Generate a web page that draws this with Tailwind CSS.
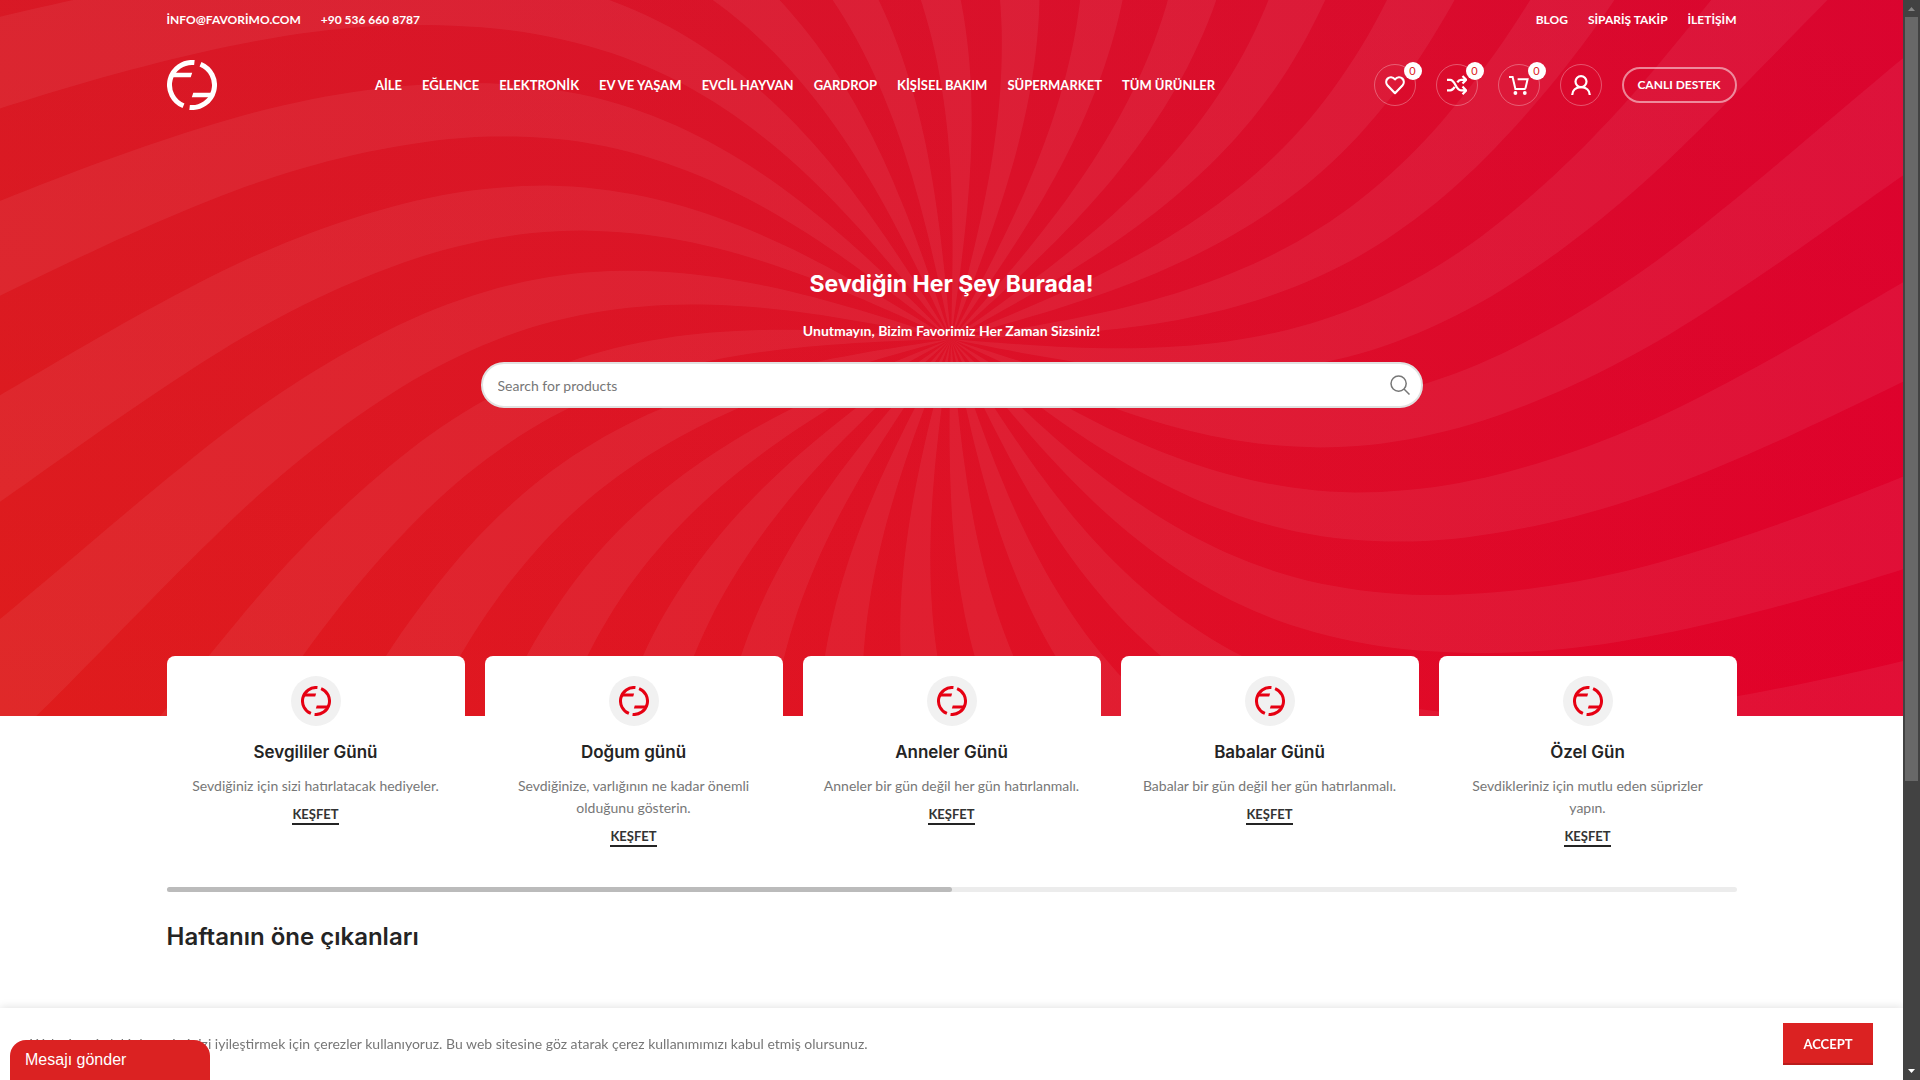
<!DOCTYPE html>
<html lang="tr">
<head>
    <meta charset="UTF-8">
    <meta name="viewport" content="width=device-width, initial-scale=1.0">
    <title>Favorimo</title>
    <script src="https://cdn.jsdelivr.net/npm/@tailwindcss/browser@4"></script>
</head>
<body class="bg-white font-[Lato,sans-serif] text-sm text-[#777]">
    <!-- Shared symbols -->
    <svg class="hidden">
        <symbol id="logo" viewBox="0 0 50 50">
            <g id="logoHalf">
                <path d="M27.4 2.6A22.5 22.5 0 0 0 16.5 45.8" fill="none" stroke="currentColor" stroke-width="5"/>
                <path d="M7 12.7H25.2L23.7 17.3H5Z" fill="currentColor"/>
            </g>
            <use href="#logoHalf" transform="rotate(180 25 25)"/>
        </symbol>
    </svg>

    <div class="min-h-screen pr-[17px]">
        <!-- Hero -->
        <div class="relative h-[716px] overflow-hidden bg-linear-to-r from-[#df1c1c] to-[#e1002a] text-white">
            <svg class="absolute inset-0 h-full w-full" viewBox="0 0 1903 716" preserveAspectRatio="xMidYMid slice" aria-hidden="true">
                <defs>
                    <linearGradient id="shade" x1="0" y1="0" x2="0" y2="1">
                        <stop offset="0" stop-color="#c8103c" stop-opacity=".28"/>
                        <stop offset="1" stop-color="#c8103c" stop-opacity="0"/>
                    </linearGradient>
                </defs>
                <rect width="1903" height="716" fill="url(#shade)"/>
                <path id="rays" fill="#fff" fill-opacity=".06"/>
            </svg>

            <header class="relative mx-auto max-w-[1570px]">
                <div class="flex h-10 items-center justify-between text-xs font-bold">
                    <div class="flex gap-5">
                        <a href="#">İNFO@FAVORİMO.COM</a>
                        <a href="#">+90 536 660 8787</a>
                    </div>
                    <nav class="flex gap-5">
                        <a href="#">BLOG</a>
                        <a href="#">SİPARİŞ TAKİP</a>
                        <a href="#">İLETİŞİM</a>
                    </nav>
                </div>
                <div class="flex h-[90px] items-center justify-between">
                    <a href="#" aria-label="Favorimo"><svg class="size-[50px]"><use href="#logo"/></svg></a>
                    <nav class="flex gap-5 text-[13px] font-bold">
                        <a href="#">AİLE</a>
                        <a href="#">EĞLENCE</a>
                        <a href="#">ELEKTRONİK</a>
                        <a href="#">EV VE YAŞAM</a>
                        <a href="#">EVCİL HAYVAN</a>
                        <a href="#">GARDROP</a>
                        <a href="#">KİŞİSEL BAKIM</a>
                        <a href="#">SÜPERMARKET</a>
                        <a href="#">TÜM ÜRÜNLER</a>
                    </nav>
                    <div class="flex items-center gap-5">
                        <a href="#" aria-label="Favoriler" class="relative flex size-[42px] items-center justify-center rounded-full border border-white/30">
                            <svg class="size-5" viewBox="0 0 20 20" fill="none" stroke="currentColor" stroke-width="2.2" stroke-linejoin="round"><path d="M10 18.2 2.6 10.4C.8 8.4.8 5.4 2.6 3.6 4.5 1.7 7.7 1.7 10 4.4 12.3 1.7 15.5 1.7 17.4 3.6 19.2 5.4 19.2 8.4 17.4 10.4Z"/></svg>
                            <span class="absolute -top-[3px] -right-[7px] flex size-[18px] items-center justify-center rounded-full bg-white text-[11px] text-[#db2222]">0</span>
                        </a>
                        <a href="#" aria-label="Karşılaştır" class="relative flex size-[42px] items-center justify-center rounded-full border border-white/30">
                            <svg class="size-5" viewBox="0 0 20 20" fill="none" stroke="currentColor" stroke-width="2.2"><path d="M0 4.8H3.2C8.5 4.8 8.5 15.4 14 15.4H19M0 15.4H3.2C5.4 15.4 6.6 13.8 7.7 11.9M10.3 7.4C11.3 5.8 12.3 4.8 14 4.8H19M15.5 1 19.2 4.8 15.5 8.6M15.5 11.6 19.2 15.4 15.5 19.2"/></svg>
                            <span class="absolute -top-[3px] -right-[7px] flex size-[18px] items-center justify-center rounded-full bg-white text-[11px] text-[#db2222]">0</span>
                        </a>
                        <a href="#" aria-label="Sepet" class="relative flex size-[42px] items-center justify-center rounded-full border border-white/30">
                            <svg class="size-5" viewBox="0 0 20 20" fill="none" stroke="currentColor" stroke-width="2"><path d="M0 2H3.6L6.4 14H16.6M8.6 4.2H18.6L16.4 13.6"/><circle cx="6.4" cy="18" r="1.9" fill="currentColor" stroke="none"/><circle cx="15.8" cy="18" r="1.9" fill="currentColor" stroke="none"/></svg>
                            <span class="absolute -top-[3px] -right-[7px] flex size-[18px] items-center justify-center rounded-full bg-white text-[11px] text-[#db2222]">0</span>
                        </a>
                        <a href="#" aria-label="Hesabım" class="relative flex size-[42px] items-center justify-center rounded-full border border-white/30">
                            <svg class="size-5" viewBox="0 0 20 20" fill="none" stroke="currentColor" stroke-width="2.2"><circle cx="10" cy="6.6" r="5.5"/><path d="M1.2 20C1.2 15.2 5 12.1 10 12.1S18.8 15.2 18.8 20"/></svg>
                        </a>
                        <a href="#" class="flex h-9 w-[115px] items-center justify-center rounded-full border-2 border-white/50 text-xs font-bold">CANLI DESTEK</a>
                    </div>
                </div>
            </header>

            <div class="relative mx-auto mt-[135px] w-[60%] max-w-[942px] text-center">
                <h1 class="font-[Inter,sans-serif] text-[23px] leading-[38px] font-bold">Sevdiğin Her Şey Burada!</h1>
                <p class="mt-[17px] leading-[22px] font-bold">Unutmayın, Bizim Favorimiz Her Zaman Sizsiniz!</p>
                <form class="relative mt-5">
                    <input type="text" aria-label="Search for products" placeholder="Search for products" class="h-[46px] w-full rounded-full border-2 border-[#e1e1e1] bg-white pr-12 pl-[15px] text-sm text-[#777] placeholder:text-[#777]">
                    <button type="button" aria-label="Search" class="absolute top-0 right-0 flex h-[46px] w-[46px] items-center justify-center text-[#777]">
                        <svg class="size-5" viewBox="0 0 20 20" fill="none" stroke="currentColor" stroke-width="1.5"><circle cx="8.6" cy="8.6" r="7.6"/><path d="M14 14 19.5 19.5"/></svg>
                    </button>
                </form>
            </div>
        </div>

        <main class="relative mx-auto -mt-[60px] max-w-[1570px]">
            <!-- Occasion cards -->
            <div class="grid grid-cols-5 gap-5 text-center leading-[22px]">
                <div class="rounded-t-lg bg-white p-5">
                    <div class="mx-auto flex size-[50px] items-center justify-center rounded-full bg-[#f1f1f1] text-[#e60012]"><svg class="size-[30px]"><use href="#logo"/></svg></div>
                    <h2 class="mt-[15px] mb-3 font-[Inter,sans-serif] text-[17px] leading-[22px] font-semibold text-[#242424]">Sevgililer Günü</h2>
                    <p>Sevdiğiniz için sizi hatırlatacak hediyeler.</p>
                    <a href="#" class="mt-2 inline-block border-b-2 border-[#242424] text-[13px] leading-[18px] font-bold text-[#333]">KEŞFET</a>
                </div>
                <div class="rounded-t-lg bg-white p-5">
                    <div class="mx-auto flex size-[50px] items-center justify-center rounded-full bg-[#f1f1f1] text-[#e60012]"><svg class="size-[30px]"><use href="#logo"/></svg></div>
                    <h2 class="mt-[15px] mb-3 font-[Inter,sans-serif] text-[17px] leading-[22px] font-semibold text-[#242424]">Doğum günü</h2>
                    <p>Sevdiğinize, varlığının ne kadar önemli olduğunu gösterin.</p>
                    <a href="#" class="mt-2 inline-block border-b-2 border-[#242424] text-[13px] leading-[18px] font-bold text-[#333]">KEŞFET</a>
                </div>
                <div class="rounded-t-lg bg-white p-5">
                    <div class="mx-auto flex size-[50px] items-center justify-center rounded-full bg-[#f1f1f1] text-[#e60012]"><svg class="size-[30px]"><use href="#logo"/></svg></div>
                    <h2 class="mt-[15px] mb-3 font-[Inter,sans-serif] text-[17px] leading-[22px] font-semibold text-[#242424]">Anneler Günü</h2>
                    <p>Anneler bir gün değil her gün hatırlanmalı.</p>
                    <a href="#" class="mt-2 inline-block border-b-2 border-[#242424] text-[13px] leading-[18px] font-bold text-[#333]">KEŞFET</a>
                </div>
                <div class="rounded-t-lg bg-white p-5">
                    <div class="mx-auto flex size-[50px] items-center justify-center rounded-full bg-[#f1f1f1] text-[#e60012]"><svg class="size-[30px]"><use href="#logo"/></svg></div>
                    <h2 class="mt-[15px] mb-3 font-[Inter,sans-serif] text-[17px] leading-[22px] font-semibold text-[#242424]">Babalar Günü</h2>
                    <p>Babalar bir gün değil her gün hatırlanmalı.</p>
                    <a href="#" class="mt-2 inline-block border-b-2 border-[#242424] text-[13px] leading-[18px] font-bold text-[#333]">KEŞFET</a>
                </div>
                <div class="rounded-t-lg bg-white p-5">
                    <div class="mx-auto flex size-[50px] items-center justify-center rounded-full bg-[#f1f1f1] text-[#e60012]"><svg class="size-[30px]"><use href="#logo"/></svg></div>
                    <h2 class="mt-[15px] mb-3 font-[Inter,sans-serif] text-[17px] leading-[22px] font-semibold text-[#242424]">Özel Gün</h2>
                    <p>Sevdikleriniz için mutlu eden süprizler yapın.</p>
                    <a href="#" class="mt-2 inline-block border-b-2 border-[#242424] text-[13px] leading-[18px] font-bold text-[#333]">KEŞFET</a>
                </div>
            </div>
            <div class="mt-5 h-[5px] rounded-full bg-[#ececec]">
                <div class="h-full w-1/2 rounded-full bg-[#bbb]"></div>
            </div>
            <h2 class="mt-[29px] font-[Inter,sans-serif] text-2xl leading-8 font-semibold text-[#242424]">Haftanın öne çıkanları</h2>
        </main>
    </div>

    <!-- Cookie notice -->
    <div class="fixed right-[17px] bottom-0 left-0 flex h-[72px] items-center justify-between bg-white px-[30px] shadow-[0_0_9px_rgba(0,0,0,0.14)]">
        <p>Web sitemizdeki deneyiminizi iyileştirmek için çerezler kullanıyoruz. Bu web sitesine göz atarak çerez kullanımımızı kabul etmiş olursunuz.</p>
        <button type="button" class="h-[42px] w-[90px] bg-[#db2222] text-[13px] font-bold text-white shadow-[inset_0_-2px_0_rgba(0,0,0,0.15)]">ACCEPT</button>
    </div>

    <!-- Chat tab -->
    <button type="button" class="fixed bottom-0 left-[10px] h-10 w-[200px] rounded-t-2xl bg-[#db2222] pl-[15px] text-left font-['Liberation_Sans',sans-serif] text-base text-white">Mesajı gönder</button>

    <!-- Scrollbar -->
    <div class="fixed inset-y-0 right-0 w-[17px] bg-[#424242] px-[2px] py-[17px]" aria-hidden="true">
        <div class="h-[73%] bg-[#686868]"></div>
        <svg class="absolute top-[7px] left-[5px] h-1 w-[7px]" viewBox="0 0 7 4"><path d="M0 4 3.5 0 7 4Z" fill="#868686"/></svg>
        <svg class="absolute bottom-[7px] left-[5px] h-1 w-[7px]" viewBox="0 0 7 4"><path d="M0 0H7L3.5 4Z" fill="#fff"/></svg>
    </div>

    <script>
        // Swirling rays: 27 light sectors around one centre, twisted more with distance
        const cx = 951, cy = 339, edges = 54;

        // Twist in degrees at every 100 units from the centre
        const twist = [0, 0.55, 2.2, 5, 8.9, 13.8, 19.1, 24.2, 29, 33.2, 36.8, 39.8, 42.2, 44, 45.4];

        // Catmull-Rom between the table's values
        function twistAt(r) {
            const i = Math.floor(r / 100), t = r / 100 - i;
            const p0 = i > 0 ? twist[i - 1] : 0.55;
            const p1 = twist[i], p2 = twist[i + 1], p3 = twist[i + 2];
            return 0.5 * (2 * p1 + (p2 - p0) * t + (2 * p0 - 5 * p1 + 4 * p2 - p3) * t * t + (3 * p1 - p0 - 3 * p2 + p3) * t * t * t);
        }

        function edge(i) {
            const points = [];
            for (let r = 0; r <= 1200; r += 12) {
                const base = (i * 360 / edges + 8.05 - twistAt(r)) * Math.PI / 180;
                const lean = Math.pow(r / 965, 3) * 3.5 * Math.PI / 180;
                let a = base;
                for (let n = 0; n < 3; n++) a = base + lean * Math.sin(2 * a);
                points.push((cx + r * Math.sin(a)).toFixed(1) + ' ' + (cy - r * Math.cos(a)).toFixed(1));
            }
            return points;
        }

        let d = '';
        for (let i = 1; i < edges; i += 2) {
            d += 'M' + edge(i).join('L') + 'L' + edge(i + 1).reverse().join('L') + 'Z';
        }
        document.getElementById('rays').setAttribute('d', d);
    </script>
</body>
</html>
